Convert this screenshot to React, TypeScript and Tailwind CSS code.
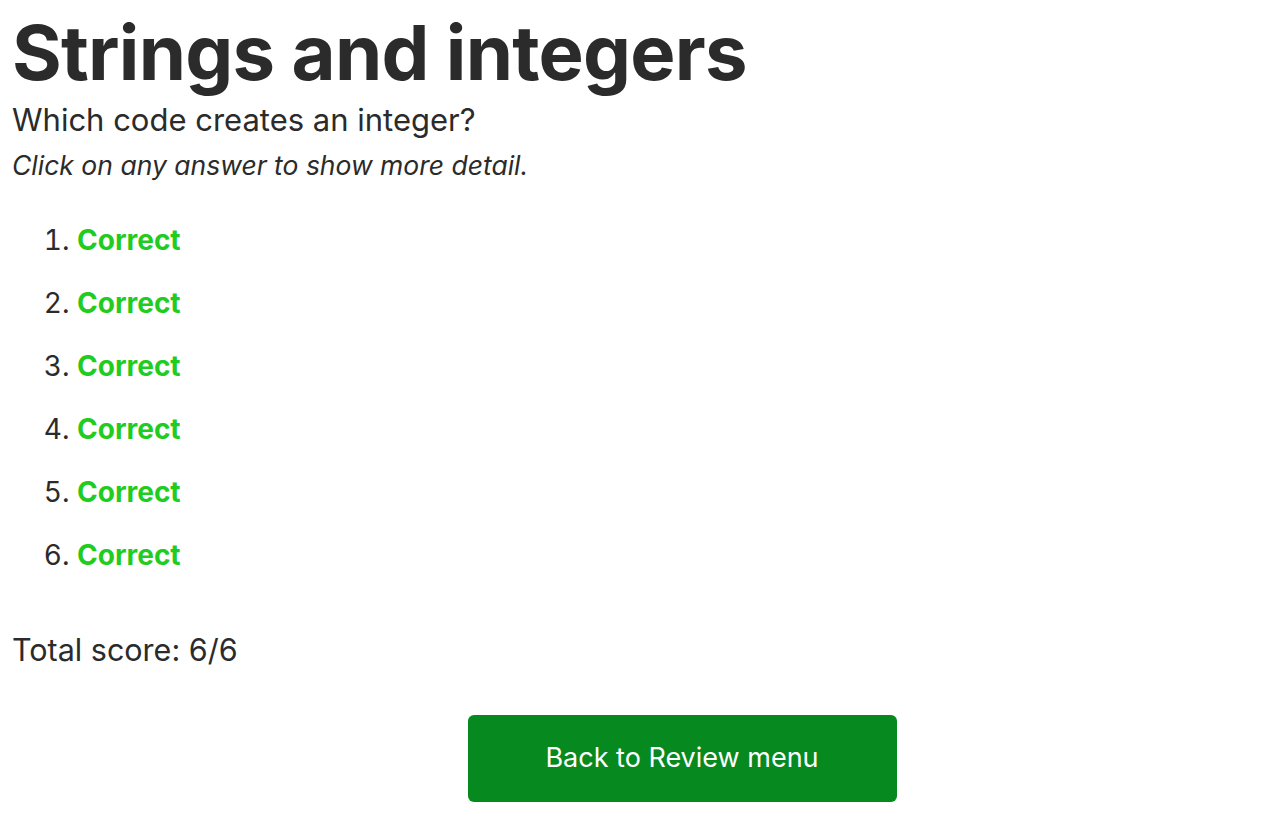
import React from "react";

const answers = [1, 2, 3, 4, 5, 6];

const ReviewResults = () => {
  return (
    <div className="min-h-screen bg-white px-3 text-[#2b2b2b] font-['Inter','Liberation_Sans',sans-serif]">
      {/* Title */}
      <h1 className="pt-[6px] text-[76px] font-bold leading-[92px] tracking-[-0.01em]">Strings and integers</h1>
      <div className="text-[31px] leading-[44px]">Which code creates an integer?</div>
      <div className="text-[26.5px] italic leading-[46px]">Click on any answer to show more detail.</div>

      {/* Answers */}
      <ol className="mt-[36px] list-decimal pl-[65px] text-[28px]">
        {answers.map((n) => (
          <li key={n} className="h-[63px] leading-[32px]">
            <span className="font-bold text-[#1fcc1f]">Correct</span>
          </li>
        ))}
      </ol>

      <div className="mt-[28px] text-[30.5px] leading-[40px]">Total score: 6/6</div>

      <div className="mt-[45px] flex justify-center">
        <button className="ml-[84px] h-[87px] w-[429px] rounded-md bg-[#06891e] text-[27px] text-white">
          Back to Review menu
        </button>
      </div>
    </div>
  );
};

export default ReviewResults;
